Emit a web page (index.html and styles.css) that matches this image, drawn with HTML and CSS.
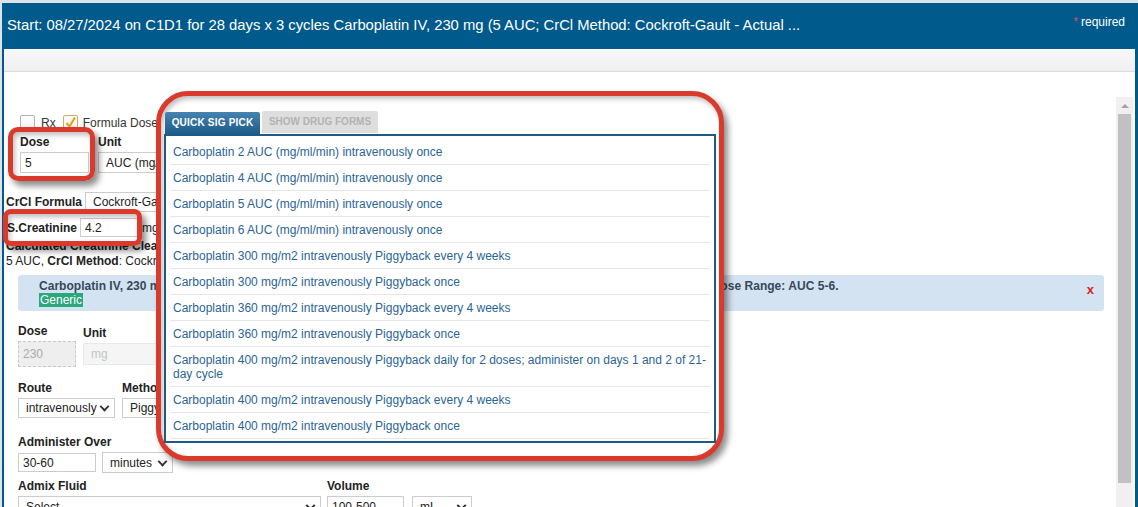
FILE: index.html
```html
<!DOCTYPE html>
<html>
<head>
    <meta charset="utf-8">
    <title>Carboplatin Order</title>
    <link rel="stylesheet" href="styles.css">
</head>
<body>
    <div class="modal">
        <div class="modal-header">
            <span class="title">Start: 08/27/2024 on C1D1 for 28 days x 3 cycles Carboplatin IV, 230 mg (5 AUC; CrCl Method: Cockroft-Gault - Actual ...</span>
            <span class="req"><span class="star">*</span> required</span>
        </div>
        <div class="toolbar"></div>

        <div class="modal-body">
            <div class="form-pane">
                <div class="checks">
                    <label class="chk"><span class="cb"></span>Rx</label>
                    <label class="chk"><span class="cb checked"><svg width="13" height="13" viewBox="0 0 13 13"><path d="M2.5 7 L5.5 10.5 L11 1.5" fill="none" stroke="#e3a21e" stroke-width="2.2"/></svg></span>Formula Dose</label>
                </div>

                <div class="fields dose-row">
                    <div class="field">
                        <span class="lbl">Dose</span>
                        <input class="txt" style="width:69px;height:21px" value="5">
                    </div>
                    <div class="field">
                        <span class="lbl">Unit</span>
                        <span class="sel" style="width:150px;height:21px"><select><option>AUC (mg/ml/min)</option></select></span>
                    </div>
                </div>

                <div class="inline-row crcl">
                    <b>CrCl Formula</b>
                    <span class="sel" style="width:170px;height:20px"><select><option>Cockroft-Gault - Actual Weight</option></select></span>
                </div>

                <div class="inline-row scr">
                    <b>S.Creatinine</b>
                    <input class="txt" style="width:58px;height:19px" value="4.2">
                    <span>mg/dL</span>
                </div>

                <div class="calc">
                    <b>Calculated Creatinine Clearance: 14.6 mL/min</b><br>
                    5 AUC, <b>CrCl Method</b>: Cockroft-Gault - Actual Weight
                </div>

                <div class="info-box">
                    <div class="info-text">
                        Carboplatin IV, 230 mg (5 AUC; CrCl Method: Cockroft-Gault - Actual Weight) intravenously Piggyback once x 1 dose. Dose Range: AUC 5-6.<br>
                        <span class="generic">Generic</span>
                    </div>
                    <span class="close">x</span>
                </div>

                <div class="fields pair-row">
                    <div class="field">
                        <span class="lbl">Dose</span>
                        <input class="txt disabled" style="width:58px;height:26px" value="230" disabled>
                    </div>
                    <div class="field unit-col">
                        <span class="lbl">Unit</span>
                        <span class="sel disabled" style="width:90px;height:22px"><select disabled><option>mg</option></select></span>
                    </div>
                </div>

                <div class="fields route-row">
                    <div class="field">
                        <span class="lbl">Route</span>
                        <span class="sel" style="width:97px;height:20px"><select><option>intravenously</option></select></span>
                    </div>
                    <div class="field">
                        <span class="lbl">Method</span>
                        <span class="sel" style="width:110px;height:20px"><select><option>Piggyback</option></select></span>
                    </div>
                </div>

                <div class="fields admin-row">
                    <div class="field">
                        <span class="lbl">Administer Over</span>
                        <div class="controls">
                            <input class="txt" style="width:78px;height:19px" value="30-60">
                            <span class="sel" style="width:71px;height:21px"><select><option>minutes</option></select></span>
                        </div>
                    </div>
                </div>

                <div class="fields admix-row">
                    <div class="field">
                        <span class="lbl">Admix Fluid</span>
                        <span class="sel" style="width:303px;height:21px"><select><option>Select</option></select></span>
                    </div>
                    <div class="field">
                        <span class="lbl">Volume</span>
                        <div class="controls">
                            <input class="txt" style="width:77px;height:21px" value="100-500">
                            <span class="sel" style="width:60px;height:21px"><select><option>mL</option></select></span>
                        </div>
                    </div>
                </div>
            </div>

            <div class="scrollbar">
                <div class="sb-up"><span class="sb-arrow"></span></div>
                <div class="sb-thumb"></div>
            </div>
        </div>
    </div>

    <!-- annotation outlines drawn over the form -->
    <div class="annot annot-dose"></div>
    <div class="annot annot-scr"></div>
    <div class="annot annot-popup"></div>

    <div class="sig-picker">
        <div class="tabs">
            <span class="tab active">QUICK SIG PICK</span>
            <span class="tab off">SHOW DRUG FORMS</span>
        </div>
        <ul class="sig-list">
            <li>Carboplatin 2 AUC (mg/ml/min) intravenously once</li>
            <li>Carboplatin 4 AUC (mg/ml/min) intravenously once</li>
            <li>Carboplatin 5 AUC (mg/ml/min) intravenously once</li>
            <li>Carboplatin 6 AUC (mg/ml/min) intravenously once</li>
            <li>Carboplatin 300 mg/m2 intravenously Piggyback every 4 weeks</li>
            <li>Carboplatin 300 mg/m2 intravenously Piggyback once</li>
            <li>Carboplatin 360 mg/m2 intravenously Piggyback every 4 weeks</li>
            <li>Carboplatin 360 mg/m2 intravenously Piggyback once</li>
            <li>Carboplatin 400 mg/m2 intravenously Piggyback daily for 2 doses; administer on days 1 and 2 of 21-day cycle</li>
            <li>Carboplatin 400 mg/m2 intravenously Piggyback every 4 weeks</li>
            <li>Carboplatin 400 mg/m2 intravenously Piggyback once</li>
        </ul>
    </div>
</body>
</html>
```

FILE: styles.css
```css
html, body {
    margin: 0;
    height: 100%;
    overflow: hidden;
}
body {
    background: #dde3e8;
    font-family: "Liberation Sans", Arial, sans-serif;
    font-size: 12px;
    color: #222;
}
.modal {
    position: relative;
    margin: 3px 0 0 2px;
    height: 504px;
    border-left: 2px solid #005a8c;
    border-right: 3px solid #005a8c;
    background: #fff;
    display: flex;
    flex-direction: column;
}
.modal-header {
    height: 46px;
    flex: none;
    background: #005a8c;
    color: #fff;
    display: flex;
    padding: 0 10px 0 3px;
}
.title {
    flex: 1;
    font-size: 14.8px;
    line-height: 44px;
    white-space: nowrap;
    overflow: hidden;
}
.req {
    margin-top: 12px;
    line-height: 14px;
    font-size: 12px;
}
.star {
    color: #f0505a;
    font-size: 10px;
    vertical-align: top;
}
.toolbar {
    height: 22px;
    flex: none;
    border-bottom: 1px solid #dcdcdc;
    background: linear-gradient(#f9f9f9, #efefef);
}
.modal-body {
    flex: 1;
    display: flex;
    padding-top: 25px;
    min-height: 0;
}
.form-pane {
    flex: 1;
    padding: 18px 0 0 2px;
}
.scrollbar {
    width: 17px;
    margin-right: 2px;
    background: #f0f0f0;
}
.sb-up {
    height: 17px;
    display: flex;
    align-items: center;
    justify-content: center;
}
.sb-arrow {
    border-left: 4px solid transparent;
    border-right: 4px solid transparent;
    border-bottom: 4px solid #a3a3a3;
}
.sb-thumb {
    height: 369px;
    margin: 0 2px;
    background: #c1c1c1;
}

/* checkboxes */
.checks {
    display: flex;
    align-items: center;
    height: 15px;
    margin-left: 14px;
    color: #333;
}
.chk {
    display: flex;
    align-items: center;
    margin-right: 7px;
}
.cb {
    box-sizing: border-box;
    width: 15px;
    height: 15px;
    margin-right: 6px;
    border: 1px solid #b3b3b3;
    border-radius: 2px;
    background: linear-gradient(#fff, #f1f1f1);
    display: flex;
    align-items: center;
    justify-content: center;
}
.cb.checked {
    border-color: #cfae62;
    margin-right: 5px;
}

/* generic field layout */
.fields {
    display: flex;
    align-items: flex-start;
    margin-left: 12px;
}
.field {
    display: flex;
    flex-direction: column;
    align-items: flex-start;
    margin-right: 7px;
}
.lbl {
    font-weight: bold;
    line-height: 14px;
    margin-bottom: 3px;
}
.controls {
    display: flex;
    align-items: center;
    gap: 6px;
}
.txt {
    box-sizing: border-box;
    border: 1px solid #ccc;
    padding: 0 4px;
    font-family: inherit;
    font-size: 12px;
    color: #222;
    background: #fff;
    outline: none;
}
.txt.disabled {
    border: 1px dashed #c9c9c9;
    background: #eee;
    color: #aaa;
}
.sel {
    position: relative;
    display: inline-block;
    box-sizing: border-box;
}
.sel select {
    appearance: none;
    -webkit-appearance: none;
    box-sizing: border-box;
    width: 100%;
    height: 100%;
    margin: 0;
    border: 1px solid #ccc;
    border-radius: 0;
    background: #fff;
    padding: 0 14px 0 7px;
    font-family: inherit;
    font-size: 12px;
    color: #222;
}
.sel::after {
    content: "";
    position: absolute;
    right: 7px;
    top: 50%;
    width: 5px;
    height: 5px;
    border-right: 2px solid #333;
    border-bottom: 2px solid #333;
    transform: translateY(-70%) rotate(45deg);
    pointer-events: none;
}
.sel.disabled select {
    background: #f2f2f2;
    border-color: #e0e0e0;
    color: #aaa;
}
.sel.disabled::after {
    border-color: #bbb;
}

.dose-row {
    margin: 5px 0 0 14px;
}
.dose-row .field {
    margin-right: 9px;
}
.inline-row {
    display: flex;
    align-items: center;
    gap: 3px;
}
.crcl {
    height: 20px;
    margin-top: 19px;
}
.scr {
    height: 19px;
    margin: 6px 0 0 1px;
}
.scr span {
    margin-left: 1px;
}
.calc {
    margin-top: 2px;
    line-height: 15px;
}
.info-box {
    display: flex;
    margin: 6px 12px 0 12px;
    padding: 4px 10px 4px 21px;
    background: #d4e3f1;
    border-radius: 3px;
}
.info-text {
    flex: 1;
    font-weight: bold;
    line-height: 14px;
    letter-spacing: 0.03px;
    color: #36485c;
    white-space: nowrap;
    overflow: hidden;
}
.generic {
    background: #2aa87c;
    color: #fff;
    font-weight: normal;
    letter-spacing: 0;
    padding: 0 1px;
}
.close {
    color: #e01b1b;
    font-weight: bold;
    font-size: 13px;
    margin-top: 3px;
}
.pair-row {
    margin-top: 13px;
}
.unit-col {
    margin-top: 2px;
}
.route-row {
    margin-top: 14px;
}
.admin-row {
    margin-top: 17px;
}
.admix-row {
    margin-top: 6px;
}
.admix-row .field {
    margin-right: 6px;
}
.admix-row .controls {
    gap: 8px;
}

/* red annotation outlines */
.annot {
    position: absolute;
    box-sizing: border-box;
    border: 5px solid #d93a2b;
    box-shadow: 4px 5px 6px rgba(0, 0, 0, 0.45), inset 2px 3px 5px rgba(0, 0, 0, 0.25);
}
.annot-dose {
    left: 8px;
    top: 127px;
    width: 87px;
    height: 54px;
    border-radius: 10px;
}
.annot-scr {
    left: 3px;
    top: 209px;
    width: 139px;
    height: 37px;
    border-radius: 8px;
}
.annot-popup {
    left: 156px;
    top: 91px;
    width: 568px;
    height: 370px;
    border-radius: 32px;
    background: #fff;
}

/* quick sig popup */
.sig-picker {
    position: absolute;
    left: 164px;
    top: 110px;
    width: 552px;
}
.tabs {
    display: flex;
    align-items: flex-end;
    gap: 2px;
    padding-left: 1px;
    height: 24px;
}
.tab {
    font-size: 10px;
    font-weight: bold;
    text-align: center;
    border-radius: 2px 2px 0 0;
}
.tab.active {
    width: 95px;
    height: 22px;
    line-height: 22px;
    letter-spacing: 0.2px;
    color: #fff;
    background: linear-gradient(#4584b0, #1d5c88);
}
.tab.off {
    width: 116px;
    height: 22px;
    line-height: 22px;
    margin-bottom: 1px;
    color: #b2b2b2;
    background: #dedede;
}
.sig-list {
    box-sizing: border-box;
    height: 309px;
    margin: 0;
    padding: 3px 4px 0;
    list-style: none;
    border: 2px solid #1c5b88;
    background: #fff;
}
.sig-list li {
    padding: 6px 0 5px 3px;
    line-height: 14px;
    border-bottom: 1px solid #e6e6e6;
    color: #2a6496;
}
```
